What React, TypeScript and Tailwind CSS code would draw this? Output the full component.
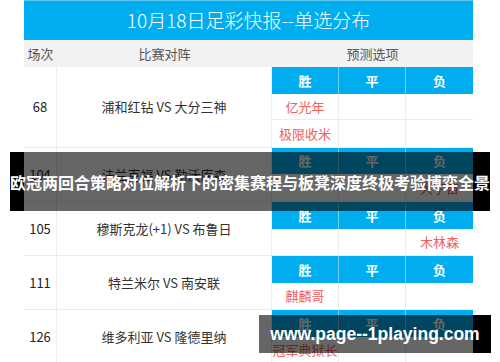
import type { ReactNode } from 'react'

/* ── match blocks: number, fixture, then rows of picks [胜, 平, 负] ── */
type Match = { no: string; vs: string; picks: string[][] }

const MATCHES: Match[] = [
  { no: '68', vs: '浦和红钻 VS 大分三神', picks: [['亿光年', '', ''], ['极限收米', '', '']] },
  { no: '104', vs: '法兰克福 VS 勒沃库森', picks: [['', '', '大宇宙']] },
  { no: '105', vs: '穆斯克龙(+1) VS 布鲁日', picks: [['', '', '木林森']] },
  { no: '111', vs: '特兰米尔 VS 南安联', picks: [['麒麟哥', '', '']] },
  { no: '126', vs: '维多利亚 VS 隆德里纳', picks: [['冠军典狱长', '', '']] },
]

const ROW = 'h-[26.6px]'
const CJK = { fontFamily: '"Noto Sans CJK SC", "Noto Sans", sans-serif' }

function Cell({ children, last }: { children?: ReactNode; last?: boolean }) {
  return (
    <div className={`flex w-[67px] items-center justify-center text-[13px] text-[#f0605d] ${last ? '' : 'border-r border-[#ececec]'}`}>
      {children}
    </div>
  )
}

function Block({ m }: { m: Match }) {
  return (
    <div className="flex border-b border-[#ececec]">
      <div className="flex w-[33px] items-center justify-center border-r border-[#ececec] text-[13px] text-[#222]">{m.no}</div>
      <div className="flex w-[215px] items-center justify-center border-r border-[#ececec] text-[13px] text-[#333]">{m.vs}</div>
      <div className="flex w-[201px] flex-col">
        <div className={`flex ${ROW} bg-[#00aeef] text-[13px] font-bold text-white`}>
          <div className="flex w-[67px] items-center justify-center border-r border-[#6fd0f5]">胜</div>
          <div className="flex w-[67px] items-center justify-center border-r border-[#6fd0f5]">平</div>
          <div className="flex w-[67px] items-center justify-center">负</div>
        </div>
        {m.picks.map((p, i) => (
          <div key={i} className={`flex ${ROW} ${i < m.picks.length - 1 ? 'border-b border-[#ececec]' : ''}`}>
            <Cell>{p[0]}</Cell>
            <Cell>{p[1]}</Cell>
            <Cell last>{p[2]}</Cell>
          </div>
        ))}
      </div>
    </div>
  )
}

export default function App() {
  return (
    <div className="relative h-[362px] w-[500px] overflow-hidden bg-white" style={CJK}>
      <div className="ml-[24px] w-[449px]">
        <div className="flex h-[40px] items-center justify-center border-t border-[#5cc9f3] bg-[#00aeef] text-[19px] font-light text-white">
          10月18日足彩快报--单选分布
        </div>
        <div className="flex h-[27px] bg-[#f2f2f2] text-[13px] text-[#555]">
          <div className="flex w-[33px] items-center justify-center">场次</div>
          <div className="flex w-[215px] items-center justify-center">比赛对阵</div>
          <div className="flex w-[201px] items-center justify-center">预测选项</div>
        </div>
        {MATCHES.map((m) => (
          <Block key={m.no} m={m} />
        ))}
      </div>

      {/* caption band over the screenshot */}
      <div className="absolute left-[10px] top-[152px] flex h-[59px] w-[480px]">
        <div className="w-[14px] bg-black" />
        <div className="w-[449px] bg-black/60" />
        <div className="w-[17px] bg-black" />
        <div className="absolute inset-0 flex items-center justify-center whitespace-nowrap text-[16px] font-bold text-white">
          欧冠两回合策略对位解析下的密集赛程与板凳深度终极考验博弈全景
        </div>
      </div>

      {/* watermark */}
      <div className="absolute left-[259px] top-[315px] flex h-[38px] w-[232px]">
        <div className="w-[214px] bg-black/60" />
        <div className="w-[18px] bg-black" />
        <div
          className="absolute inset-0 flex items-center justify-center whitespace-nowrap text-[17.5px] font-bold text-white"
          style={{ fontFamily: '"Liberation Sans", Arial, sans-serif' }}
        >
          www.page--1playing.com
        </div>
      </div>
    </div>
  )
}
